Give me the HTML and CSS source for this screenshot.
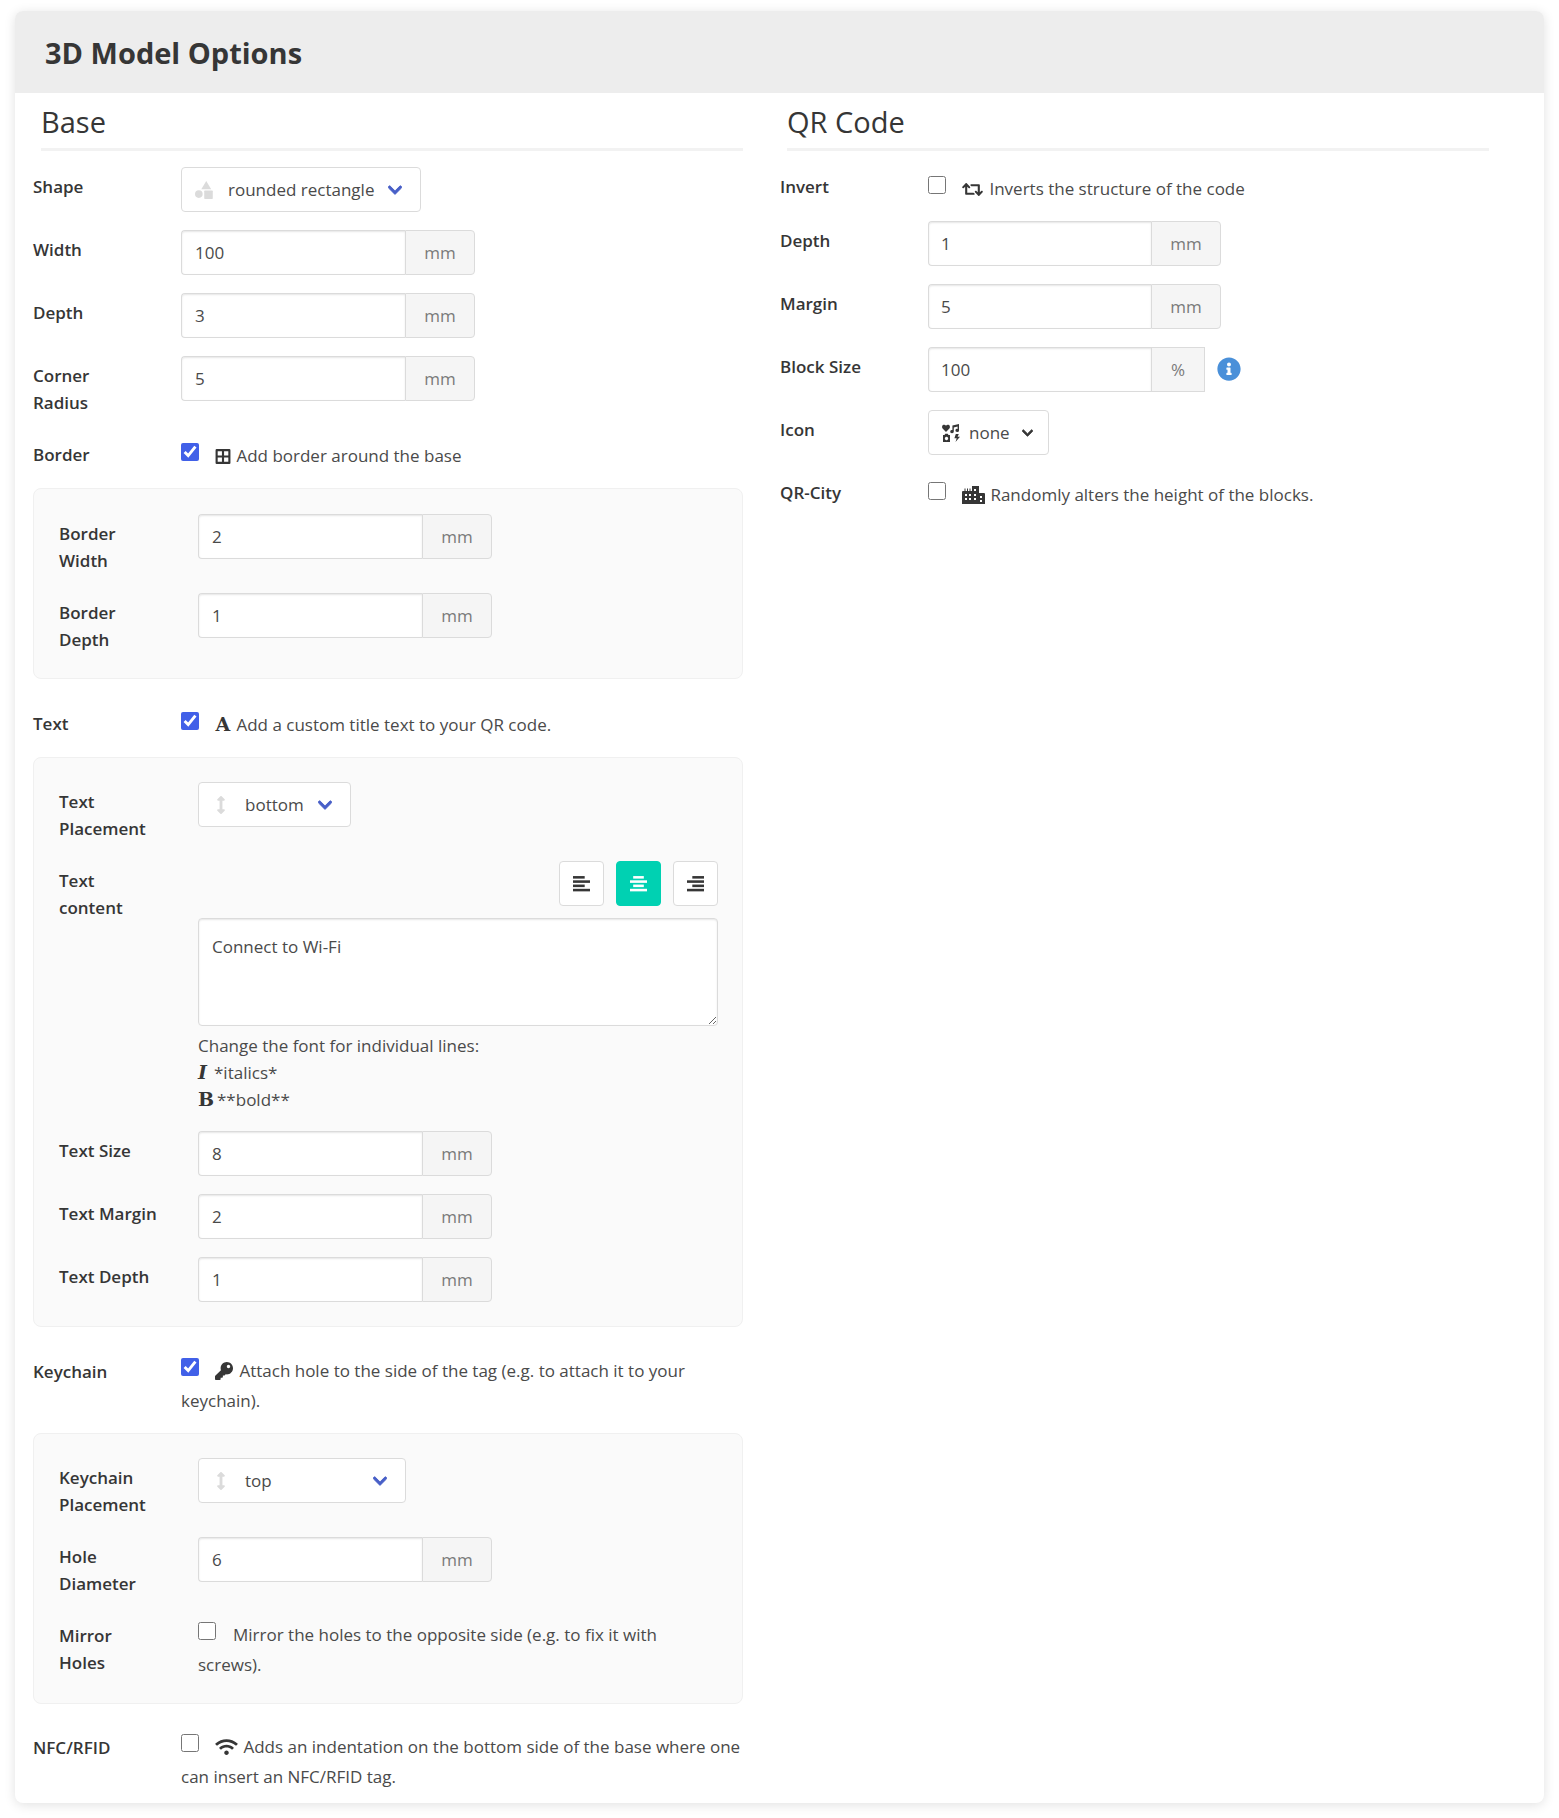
FILE: index.html
```html
<!DOCTYPE html>
<html lang="en">
<head>
<meta charset="utf-8">
<title>3D Model Options</title>
<link rel="stylesheet" href="styles.css">
</head>
<body>
<svg class="defs" aria-hidden="true">
  <symbol id="chev" viewBox="0 0 448 512"><path d="M207.029 381.476L12.686 187.132c-9.373-9.373-9.373-24.569 0-33.941l22.667-22.667c9.357-9.357 24.522-9.375 33.901-.04L224 284.505l154.745-154.021c9.379-9.335 24.544-9.317 33.901.04l22.667 22.667c9.373 9.373 9.373 24.569 0 33.941L240.971 381.476c-9.373 9.372-24.569 9.372-33.942 0z"/></symbol>
  <symbol id="updown" viewBox="0 0 256 512"><path d="M214.059 377.941H168V134.059h46.059c21.382 0 32.09-25.851 16.971-40.971L144.971 7.029c-9.373-9.373-24.568-9.373-33.941 0L24.971 93.088c-15.119 15.119-4.411 40.971 16.971 40.971H88v243.882H41.941c-21.382 0-32.09 25.851-16.971 40.971l86.059 86.059c9.373 9.373 24.568 9.373 33.941 0l86.059-86.059c15.12-15.119 4.412-40.971-16.97-40.971z"/></symbol>
</svg>
<main class="card">
  <header class="card-head"><h1 class="card-title">3D Model Options</h1></header>
  <div class="cols">
    <section class="col">
      <h2 class="sec-title">Base</h2>
      <div class="row">
        <div class="lab">Shape</div>
        <div class="sel">
          <svg class="sel-ico" viewBox="0 0 16 16"><path d="M10 0l4.400 7.400H5.600z"/><circle cx="3.400" cy="11.600" r="3.400"/><rect x="8.200" y="8.400" width="7.600" height="7.600" rx=".6"/></svg>
          <span>rounded rectangle</span>
          <svg class="chev"><use href="#chev"/></svg>
        </div>
      </div>
      <div class="row">
        <div class="lab">Width</div>
        <div class="grp"><input class="inp" type="text" value="100"><span class="addon">mm</span></div>
      </div>
      <div class="row">
        <div class="lab">Depth</div>
        <div class="grp"><input class="inp" type="text" value="3"><span class="addon">mm</span></div>
      </div>
      <div class="row">
        <div class="lab">Corner Radius</div>
        <div class="grp"><input class="inp" type="text" value="5"><span class="addon">mm</span></div>
      </div>
      <div class="row row-check">
        <div class="lab">Border</div>
        <div class="chk">
          <input class="box" type="checkbox" checked>
          <svg class="gly gly-border" viewBox="0 0 448 512"><path d="M416 32H32A32 32 0 0 0 0 64v384a32 32 0 0 0 32 32h384a32 32 0 0 0 32-32V64a32 32 0 0 0-32-32zm-32 64v128H256V96zm-192 0v128H64V96zM64 416V288h128v128zm192 0V288h128v128z"/></svg>Add border around the base
        </div>
      </div>
      <div class="panel panel-border">
        <div class="row">
          <div class="lab lab-sub">Border Width</div>
          <div class="grp"><input class="inp" type="text" value="2"><span class="addon">mm</span></div>
        </div>
        <div class="row row-last">
          <div class="lab lab-sub">Border Depth</div>
          <div class="grp"><input class="inp" type="text" value="1"><span class="addon">mm</span></div>
        </div>
      </div>
      <div class="row row-check">
        <div class="lab">Text</div>
        <div class="chk">
          <input class="box" type="checkbox" checked>
          <span class="letter letter-a">A</span>Add a custom title text to your QR code.
        </div>
      </div>
      <div class="panel">
        <div class="row">
          <div class="lab lab-sub">Text Placement</div>
          <div class="sel">
            <svg class="sel-ico ico-updown"><use href="#updown"/></svg>
            <span>bottom</span>
            <svg class="chev"><use href="#chev"/></svg>
          </div>
        </div>
        <div class="row">
          <div class="lab lab-sub">Text content</div>
          <div class="content">
            <div class="aligns">
              <button class="al" type="button"><svg class="al-ico" viewBox="0 0 16 16"><rect y="1" width="11" height="2.400"/><rect y="5" width="16" height="2.400"/><rect y="9" width="11" height="2.400"/><rect y="13" width="16" height="2.400"/></svg></button>
              <button class="al al-on" type="button"><svg class="al-ico" viewBox="0 0 16 16"><rect x="3" y="1" width="10" height="2.400"/><rect y="5" width="16" height="2.400"/><rect x="3" y="9" width="10" height="2.400"/><rect y="13" width="16" height="2.400"/></svg></button>
              <button class="al" type="button"><svg class="al-ico" viewBox="0 0 16 16"><rect x="5" y="1" width="11" height="2.400"/><rect y="5" width="16" height="2.400"/><rect x="5" y="9" width="11" height="2.400"/><rect y="13" width="16" height="2.400"/></svg></button>
            </div>
            <textarea class="area">Connect to Wi-Fi</textarea>
            <div class="hint">
              <div>Change the font for individual lines:</div>
              <div><span class="letter letter-i">I</span>*italics*</div>
              <div><span class="letter letter-b">B</span>**bold**</div>
            </div>
          </div>
        </div>
        <div class="row">
          <div class="lab lab-sub">Text Size</div>
          <div class="grp"><input class="inp" type="text" value="8"><span class="addon">mm</span></div>
        </div>
        <div class="row">
          <div class="lab lab-sub">Text Margin</div>
          <div class="grp"><input class="inp" type="text" value="2"><span class="addon">mm</span></div>
        </div>
        <div class="row row-last">
          <div class="lab lab-sub">Text Depth</div>
          <div class="grp"><input class="inp" type="text" value="1"><span class="addon">mm</span></div>
        </div>
      </div>
      <div class="row row-wrap">
        <div class="lab">Keychain</div>
        <div class="chk">
          <input class="box" type="checkbox" checked>
          <svg class="gly gly-key" viewBox="0 0 512 512"><path d="M512 176.001C512 273.203 433.202 352 336 352c-11.22 0-22.19-1.062-32.827-3.069l-24.012 27.014A23.999 23.999 0 0 1 261.223 384H224v40c0 13.255-10.745 24-24 24h-40v40c0 13.255-10.745 24-24 24H24c-13.255 0-24-10.745-24-24v-78.059c0-6.365 2.529-12.47 7.029-16.971l161.802-161.802C163.108 213.814 160 195.271 160 176 160 78.798 238.797.001 335.999 0 433.488-.001 512 78.511 512 176.001zM336 128c0 26.51 21.49 48 48 48s48-21.49 48-48-21.49-48-48-48-48 21.49-48 48z"/></svg>Attach hole to the side of the tag (e.g. to attach it to your keychain).
        </div>
      </div>
      <div class="panel panel-key">
        <div class="row">
          <div class="lab lab-sub">Keychain Placement</div>
          <div class="sel sel-wide">
            <svg class="sel-ico ico-updown"><use href="#updown"/></svg>
            <span>top</span>
            <svg class="chev"><use href="#chev"/></svg>
          </div>
        </div>
        <div class="row">
          <div class="lab lab-sub">Hole Diameter</div>
          <div class="grp"><input class="inp" type="text" value="6"><span class="addon">mm</span></div>
        </div>
        <div class="row row-wrap row-last">
          <div class="lab lab-sub">Mirror Holes</div>
          <div class="chk">
            <input class="box box-plain" type="checkbox">Mirror the holes to the opposite side (e.g. to fix it with screws).
          </div>
        </div>
      </div>
      <div class="row row-wrap row-last">
        <div class="lab">NFC/RFID</div>
        <div class="chk">
          <input class="box" type="checkbox">
          <svg class="gly gly-wifi" viewBox="0 0 640 512"><path d="M634.91 154.88C457.74-8.99 182.19-8.93 5.09 154.88c-6.66 6.16-6.79 16.59-.35 22.98l34.24 33.97c6.14 6.1 16.02 6.23 22.4.38 145.92-133.68 371.3-133.71 517.25 0 6.38 5.85 16.26 5.71 22.4-.38l34.24-33.97c6.43-6.39 6.3-16.82-.36-22.98zM320 352c-35.35 0-64 28.65-64 64s28.65 64 64 64 64-28.65 64-64-28.65-64-64-64zm202.67-83.59c-115.26-101.93-290.21-101.82-405.34 0-6.9 6.1-7.12 16.69-.57 23.15l34.44 33.99c6 5.92 15.66 6.32 22.05.8 83.95-72.57 209.74-72.41 293.49 0 6.39 5.52 16.05 5.13 22.05-.8l34.44-33.99c6.56-6.46 6.33-17.06-.56-23.15z"/></svg>Adds an indentation on the bottom side of the base where one can insert an NFC/RFID tag.
        </div>
      </div>
    </section>
    <section class="col col-qr">
      <h2 class="sec-title">QR Code</h2>
      <div class="row row-qr">
        <div class="lab">Invert</div>
        <div class="chk">
          <input class="box" type="checkbox">
          <svg class="gly gly-retweet" viewBox="0 0 640 512"><path d="M629.657 343.598L528.971 444.284c-9.373 9.372-24.568 9.372-33.941 0L394.343 343.598c-9.373-9.373-9.373-24.569 0-33.941l10.823-10.823c9.562-9.562 25.133-9.34 34.419.492L480 342.118V160H292.451a24.005 24.005 0 0 1-16.971-7.029l-16-16C244.361 121.851 255.069 96 276.451 96H520c13.255 0 24 10.745 24 24v222.118l40.416-43.792c9.285-9.831 24.856-10.054 34.419-.492l10.823 10.823c9.372 9.372 9.372 24.569-.001 33.941zm-265.138 15.431A23.999 23.999 0 0 0 347.548 352H160V169.881l40.416 43.792c9.286 9.831 24.856 10.054 34.419.491l10.822-10.822c9.373-9.373 9.373-24.569 0-33.941L144.971 67.716c-9.373-9.373-24.569-9.373-33.941 0L10.343 168.402c-9.373 9.373-9.373 24.569 0 33.941l10.822 10.822c9.562 9.562 25.133 9.34 34.419-.491L96 169.881V392c0 13.255 10.745 24 24 24h243.549c21.382 0 32.09-25.851 16.971-40.971l-16.001-16z"/></svg>Inverts the structure of the code
        </div>
      </div>
      <div class="row">
        <div class="lab">Depth</div>
        <div class="grp"><input class="inp" type="text" value="1"><span class="addon">mm</span></div>
      </div>
      <div class="row">
        <div class="lab">Margin</div>
        <div class="grp"><input class="inp" type="text" value="5"><span class="addon">mm</span></div>
      </div>
      <div class="row">
        <div class="lab">Block Size</div>
        <div class="grp grp-pct"><input class="inp" type="text" value="100"><span class="addon addon-pct">%</span></div>
        <svg class="info" viewBox="0 0 512 512"><path d="M256 8C119.043 8 8 119.083 8 256c0 136.997 111.043 248 248 248s248-111.003 248-248C504 119.083 392.957 8 256 8zm0 110c23.196 0 42 18.804 42 42s-18.804 42-42 42-42-18.804-42-42 18.804-42 42-42zm56 254c0 6.627-5.373 12-12 12h-88c-6.627 0-12-5.373-12-12v-24c0-6.627 5.373-12 12-12h12v-64h-12c-6.627 0-12-5.373-12-12v-24c0-6.627 5.373-12 12-12h64c6.627 0 12 5.373 12 12v100h12c6.627 0 12 5.373 12 12v24z"/></svg>
      </div>
      <div class="row">
        <div class="lab">Icon</div>
        <div class="sel sel-icons">
          <svg class="sel-ico ico-mix" viewBox="0 0 18 18">
            <path d="M4 8L.6 4.400C-.4 3.200 0 1.200 1.600.8 2.600.5 3.500 1 4 1.800 4.500 1 5.400.5 6.400.8 8 1.200 8.400 3.200 7.400 4.400z"/>
            <path d="M17 0v6.400a1.800 1.600 0 1 1-1.400-1.500V2.600l-3.800 1v4a1.800 1.600 0 1 1-1.400-1.500V1.400z"/>
            <path d="M1 11h1.500l.8-1.200h2.400l.8 1.200H8v7H1zm3.500 1.800a1.700 1.700 0 1 0 .01 0z" fill-rule="evenodd"/>
            <path d="M13.800 10h3l-1.200 2.800H18l-4.500 5.200 1.200-3.800H12.400z"/>
          </svg>
          <span>none</span>
          <svg class="chev chev-dark"><use href="#chev"/></svg>
        </div>
      </div>
      <div class="row row-qr row-last">
        <div class="lab">QR-City</div>
        <div class="chk">
          <input class="box" type="checkbox">
          <svg class="gly gly-city" viewBox="0 0 23 18"><path fill-rule="evenodd" d="M1 5h1.500V2.500h1V5H5V2.500h1V5h1.500V2.500h1V5H10V0h7v7h5a1 1 0 0 1 1 1v10H0V6a1 1 0 0 1 1-1zm2 3v2h2V8zm4 0v2h2V8zm5 0v2h2V8zm0-5v2h2V3zm6 7v2h2v-2zM3 12v2h2v-2zm4 0v2h2v-2zm5 0v2h2v-2zm6 2v2h2v-2z"/></svg>Randomly alters the height of the blocks.
        </div>
      </div>
    </section>
  </div>
</main>
</body>
</html>
```

FILE: styles.css
```css
* { box-sizing: border-box; }
html, body { margin: 0; background: #fff; }
body {
  padding: 11px 15px 15px;
  font-family: "Open Sans", "Liberation Sans", sans-serif;
  font-size: 17px;
  line-height: 27px;
  color: #4a4a4a;
}
.defs { display: none; }

.card {
  width: 1529px;
  background: #fff;
  border-radius: 8px;
  box-shadow: 0 2px 12px rgba(10, 10, 10, .12);
  overflow: hidden;
}
.card-head {
  height: 82px;
  display: flex;
  align-items: center;
  padding-left: 30px;
  background: #ededed;
}
.card-title {
  margin: 2px 0 0;
  font-size: 29px;
  font-weight: 700;
  line-height: 40px;
  color: #363636;
}
.cols {
  display: grid;
  grid-template-columns: 747px 1fr;
  padding: 0 0 11px 18px;
}
.col { padding-right: 37px; min-width: 0; }
.col-qr { padding-right: 55px; }
.col-qr .sec-title { margin-left: 7px; }
.sec-title {
  margin: 8px 0 16px 8px;
  padding-bottom: 5px;
  border-bottom: 3px solid #f2f2f2;
  font-size: 29px;
  font-weight: 400;
  line-height: 42px;
  color: #363636;
}

.row { display: flex; align-items: flex-start; margin-bottom: 18px; }
.row-last { margin-bottom: 0; }
.row-check { margin-bottom: 17px; }
.row-wrap { margin-bottom: 17px; }
.row-wrap.row-last { margin-bottom: 0; }
.lab {
  flex: 0 0 148px;
  width: 148px;
  padding: 6px 40px 1px 0;
  font-weight: 600;
  color: #363636;
}
.lab-sub { flex-basis: 139px; width: 139px; padding-right: 39px; }

.grp { display: flex; width: 294px; height: 45px; }
.grp-pct { width: 278px; }
.col-qr .grp { width: 293px; }
.col-qr .grp-pct { width: 277px; }
.inp {
  flex: 0 0 224px;
  width: 224px;
  height: 45px;
  padding: 0 13px;
  border: 1px solid #dbdbdb;
  border-right: 0;
  border-radius: 4px 0 0 4px;
  box-shadow: inset 0 1px 2px rgba(10, 10, 10, .1);
  background: #fff;
  font: inherit;
  color: #4a4a4a;
  outline: none;
}
.col-qr .inp { flex-basis: 223px; width: 223px; padding-left: 12px; }
.addon {
  flex: 1;
  display: flex;
  align-items: center;
  justify-content: center;
  border: 1px solid #dbdbdb;
  border-radius: 0 4px 4px 0;
  background: #f5f5f5;
  color: #7a7a7a;
}
.addon-pct { border-radius: 0; }
.info { width: 24px; height: 24px; margin: 10px 0 0 12px; fill: #4a90d9; }

.sel {
  display: inline-flex;
  align-items: center;
  height: 45px;
  padding: 0 18px 0 13px;
  border: 1px solid #dbdbdb;
  border-radius: 4px;
  background: #fff;
}
.sel-wide { width: 208px; }
.sel-icons { padding-right: 15px; }
.sel-ico { flex: 0 0 18px; width: 18px; height: 18px; margin-right: 15px; fill: #dbdbdb; }
.ico-mix { fill: #363636; margin-right: 9px; }
.chev {
  flex: 0 0 14px;
  width: 14px;
  height: 16px;
  margin-left: 14px;
  fill: #485fc7;
  stroke: #485fc7;
  stroke-width: 30;
}
.sel-wide .chev { margin-left: auto; }
.chev-dark { flex-basis: 11px; width: 11px; margin-left: 12px; fill: #363636; stroke: #363636; }

.chk { flex: 1; min-width: 0; padding-top: 6px; line-height: 30px; }
.row-wrap .chk { padding-top: 4px; }
.row-qr { margin-bottom: 17px; }
.row-qr .chk { padding-top: 7px; }
.row-qr.row-last { margin-bottom: 0; }
.box {
  width: 18px;
  height: 18px;
  margin: 2px 12px 0 0;
  vertical-align: top;
  accent-color: #4160e8;
}
.box-plain { margin-right: 17px; }
.gly { display: inline-block; height: 16px; margin-right: 5px; vertical-align: -2px; fill: #363636; }
.gly-border { width: 16px; height: 17px; vertical-align: -3px; }
.gly-key { width: 18px; height: 18px; margin-right: 6px; vertical-align: -3px; }
.gly-wifi { width: 23px; height: 18px; margin-right: 5px; vertical-align: -3px; }
.gly-retweet { width: 21px; height: 17px; margin-right: 6px; vertical-align: -3px; }
.gly-city { width: 23px; height: 18px; margin-right: 5px; vertical-align: -3px; }
.letter {
  display: inline-block;
  font-family: "DejaVu Serif", "Liberation Serif", serif;
  font-weight: 700;
  font-size: 19px;
  color: #363636;
  line-height: 1;
}
.letter-a { width: 16px; margin-right: 5px; }
.letter-i { width: 16px; font-style: italic; }
.letter-b { width: 19px; }

.panel {
  margin-bottom: 25px;
  padding: 24px 24px 24px 25px;
  border: 1px solid #f0f0f0;
  border-radius: 8px;
  background: #fafafa;
}
.panel-border { padding-top: 25px; }
.panel-key { padding-bottom: 23px; margin-bottom: 24px; }

.content { flex: 1; min-width: 0; }
.aligns { display: flex; justify-content: flex-end; gap: 12px; margin-bottom: 12px; }
.al {
  display: flex;
  align-items: center;
  justify-content: center;
  width: 45px;
  height: 45px;
  padding: 0;
  border: 1px solid #dbdbdb;
  border-radius: 4px;
  background: #fff;
}
.al-on { border-color: #00d1b2; background: #00d1b2; }
.al-ico { width: 17px; height: 17px; fill: #363636; }
.al-on .al-ico { fill: #fff; }
.area {
  display: block;
  width: 100%;
  height: 108px;
  padding: 14px 13px;
  border: 1px solid #dbdbdb;
  border-radius: 4px;
  box-shadow: inset 0 1px 2px rgba(10, 10, 10, .1);
  background: #fff;
  font: inherit;
  color: #4a4a4a;
  outline: none;
  resize: vertical;
}
.hint { margin-top: 6px; }
```
